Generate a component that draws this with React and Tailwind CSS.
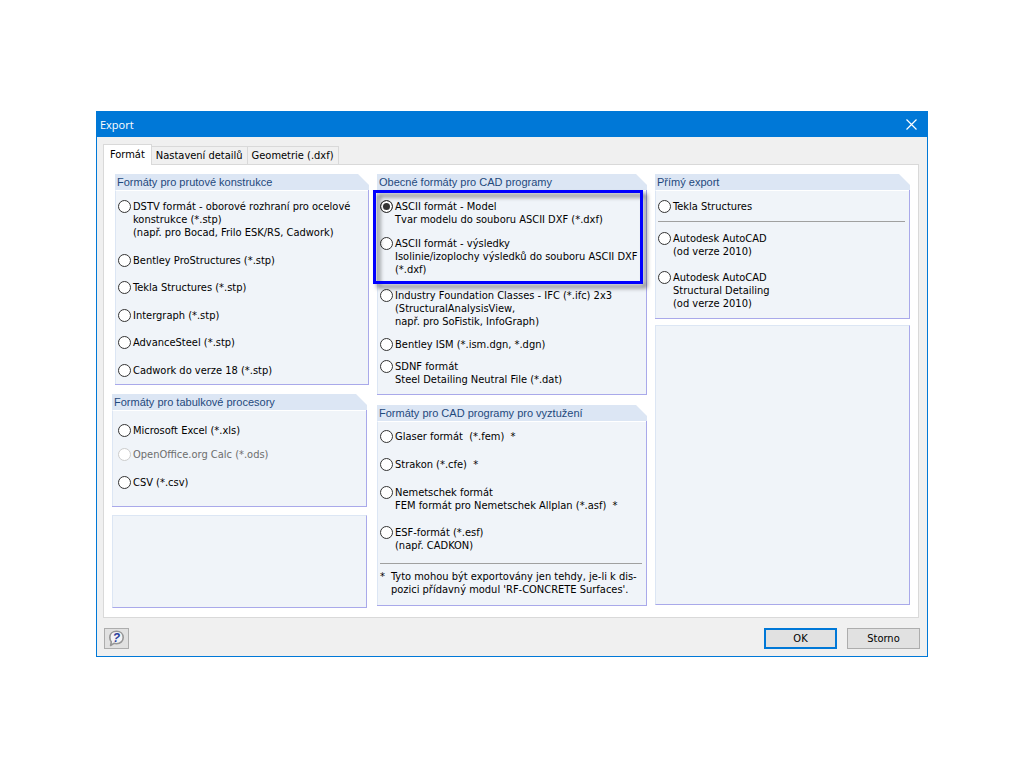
import { useState } from "react";
import clsx from "clsx";

const TABS = ["Formát", "Nastavení detailů", "Geometrie (.dxf)"];

// Titled box with the cut top right corner; without a title it is an empty box
const Group = ({ title, className, bodyClassName, children }) => (
  <section
    className={clsx(
      "flex flex-col border-r border-b border-[#a9a9ea] bg-[#f0f4f9]",
      !title && "border-t border-l border-t-[#dce6f4] border-l-[#dce6f4]",
      className
    )}
  >
    {title && (
      <h2 className="-mr-px h-4 bg-white font-['Liberation_Sans',sans-serif] text-[11px] leading-4 text-[#1f497d]">
        <span className="block bg-[#dce6f4] pl-0.5 [clip-path:polygon(0_0,calc(100%-11px)_0,100%_11px,100%_100%,0_100%)]">
          {title}
        </span>
      </h2>
    )}
    {title && (
      <div
        className={clsx(
          "flex grow flex-col border-t border-l border-t-white border-l-[#dce6f4] pr-1",
          bodyClassName
        )}
      >
        {children}
      </div>
    )}
  </section>
);

const Option = ({ id, lines, className, checked, disabled }) => (
  <div className={clsx("flex items-start gap-0.5", className)}>
    <input
      type="radio"
      name="format"
      id={id}
      defaultChecked={checked}
      disabled={disabled}
      className="size-[13px] shrink-0 appearance-none rounded-full border border-[#333] bg-white checked:bg-[#333] checked:shadow-[inset_0_0_0_2px_white] disabled:border-[#ccc]"
    />
    <label
      htmlFor={id}
      className={clsx("whitespace-pre", disabled && "text-[#6d6d6d]")}
    >
      {lines.join("\n")}
    </label>
  </div>
);

const Separator = ({ className }) => (
  <hr className={clsx("border-t border-[#a0a0a0]", className)} />
);

const HelpIcon = () => (
  <svg width="17" height="17" viewBox="0 0 17 17" aria-hidden="true">
    <path
      d="M8.500 1.200c4 0 6.700 2.700 6.700 6.200s-2.700 6.300-6.700 6.300c-1 0-1.800-.1-2.600-.4L2.600 15.500l.7-3.700C2.300 10.500 1.800 9 1.800 7.400c0-3.500 2.700-6.200 6.700-6.200z"
      fill="#f2f2f5"
      stroke="#969696"
      strokeWidth="1.6"
      strokeLinejoin="round"
    />
    <text
      x="8.500"
      y="12"
      textAnchor="middle"
      fontFamily="Liberation Sans, sans-serif"
      fontSize="12"
      fontWeight="bold"
      fontStyle="italic"
      fill="#2b3f9c"
    >
      ?
    </text>
  </svg>
);

const App = () => {
  const [activeTab, setActiveTab] = useState(TABS[0]);

  return (
    <div className="min-h-screen bg-white px-24 pt-[111px] font-['DejaVu_Sans_Condensed','Noto_Sans',sans-serif] text-[11px] leading-[13px] text-black">
      <div className="border border-[#0078d7] bg-[#f0f0f0]">
        <header className="flex h-[25px] items-center justify-between bg-[#0078d7] pr-2.5 pl-[3px] text-white">
          <h1 className="font-['Open_Sans',sans-serif] text-[11px]">Export</h1>
          <button type="button" aria-label="Zavřít">
            <svg width="11" height="11" viewBox="0 0 11 11">
              <path d="M.5.5l10 10M10.500.5l-10 10" stroke="white" strokeWidth="1.2" />
            </svg>
          </button>
        </header>

        <div className="px-1.5 pt-[7px]">
          {/* Tabs */}
          <div role="tablist" className="flex items-end">
            {TABS.map((tab) => (
              <button
                key={tab}
                type="button"
                role="tab"
                aria-selected={tab === activeTab}
                onClick={() => setActiveTab(tab)}
                className={clsx(
                  "border-t border-r border-[#d9d9d9]",
                  tab === activeTab
                    ? "relative -mb-px h-[21px] border-l bg-white px-1.5 pb-0.5"
                    : "h-[18px] px-1"
                )}
              >
                {tab}
              </button>
            ))}
          </div>

          <main className="mr-0.5 grid grid-cols-[257fr_270fr_255fr] gap-2 border border-[#d9d9d9] bg-white pt-[9px] pr-2 pb-[9px] pl-2">
            <div className="flex flex-col">
              <Group
                title="Formáty pro prutové konstrukce"
                className="ml-[3px] min-h-[211px]"
                bodyClassName="justify-between pt-[9px] pb-[7px] pl-0.5"
              >
                <Option
                  id="dstv"
                  lines={[
                    "DSTV formát - oborové rozhraní pro ocelové",
                    "konstrukce (*.stp)",
                    "(např. pro Bocad, Frilo ESK/RS, Cadwork)",
                  ]}
                />
                <Option id="prostructures" lines={["Bentley ProStructures (*.stp)"]} />
                <Option id="tekla-stp" lines={["Tekla Structures (*.stp)"]} />
                <Option id="intergraph" lines={["Intergraph (*.stp)"]} />
                <Option id="advancesteel" lines={["AdvanceSteel (*.stp)"]} />
                <Option id="cadwork" lines={["Cadwork do verze 18 (*.stp)"]} />
              </Group>
              <Group
                title="Formáty pro tabulkové procesory"
                className="mt-[9px] mr-0.5"
                bodyClassName="pt-[13px] pb-[17px] pl-[5px]"
              >
                <Option id="excel" lines={["Microsoft Excel (*.xls)"]} />
                <Option
                  id="openoffice"
                  lines={["OpenOffice.org Calc (*.ods)"]}
                  className="mt-[11px]"
                  disabled
                />
                <Option id="csv" lines={["CSV (*.csv)"]} className="mt-[15px]" />
              </Group>
              <Group className="mt-2 mr-0.5 min-h-[93px]" />
            </div>

            <div className="flex flex-col">
              <Group
                title="Obecné formáty pro CAD programy"
                bodyClassName="pt-[9px] pb-2 pl-0.5"
              >
                <div className="relative">
                  <Option
                    id="ascii-model"
                    lines={["ASCII formát - Model", "Tvar modelu do souboru ASCII DXF (*.dxf)"]}
                    checked
                  />
                  <Option
                    id="ascii-results"
                    lines={[
                      "ASCII formát - výsledky",
                      "Isolinie/izoplochy výsledků do souboru ASCII DXF",
                      "(*.dxf)",
                    ]}
                    className="mt-[11px]"
                  />
                  {/* Highlight frame over both ASCII options */}
                  <div className="pointer-events-none absolute -top-2.5 -right-px -bottom-2 -left-[7px] border-3 border-[#0000ff] drop-shadow-[4px_4px_2px_rgba(0,0,0,0.5)]" />
                </div>
                <Option
                  id="ifc"
                  lines={[
                    "Industry Foundation Classes - IFC (*.ifc) 2x3",
                    "(StructuralAnalysisView,",
                    "např. pro SoFistik, InfoGraph)",
                  ]}
                  className="mt-[13px]"
                />
                <Option
                  id="ism"
                  lines={["Bentley ISM (*.ism.dgn, *.dgn)"]}
                  className="mt-2.5"
                />
                <Option
                  id="sdnf"
                  lines={["SDNF formát", "Steel Detailing Neutral File (*.dat)"]}
                  className="mt-[9px]"
                />
              </Group>
              <Group
                title="Formáty pro CAD programy pro vyztužení"
                className="mt-2.5"
                bodyClassName="pt-2 pb-[9px] pl-0.5"
              >
                <Option id="glaser" lines={["Glaser formát  (*.fem)  *"]} />
                <Option id="strakon" lines={["Strakon (*.cfe)  *"]} className="mt-[15px]" />
                <Option
                  id="nemetschek"
                  lines={["Nemetschek formát", "FEM formát pro Nemetschek Allplan (*.asf)  *"]}
                  className="mt-[15px]"
                />
                <Option
                  id="esf"
                  lines={["ESF-formát (*.esf)", "(např. CADKON)"]}
                  className="mt-3.5"
                />
                <Separator className="mt-[11px]" />
                <div className="mt-1.5 flex gap-1.5 whitespace-pre">
                  <span>*</span>
                  <p>{"Tyto mohou být exportovány jen tehdy, je-li k dis-\npozici přídavný modul 'RF-CONCRETE Surfaces'."}</p>
                </div>
              </Group>
            </div>

            <div className="flex flex-col">
              <Group title="Přímý export" bodyClassName="pt-[9px] pb-2 pl-0.5">
                <Option id="tekla" lines={["Tekla Structures"]} />
                <Separator className="mt-2" />
                <Option
                  id="autocad"
                  lines={["Autodesk AutoCAD", "(od verze 2010)"]}
                  className="mt-2.5"
                />
                <Option
                  id="autocad-detailing"
                  lines={["Autodesk AutoCAD", "Structural Detailing", "(od verze 2010)"]}
                  className="mt-[13px]"
                />
              </Group>
              <Group className="mt-1.5 min-h-[280px]" />
            </div>
          </main>
        </div>

        <footer className="flex items-center gap-2.5 px-[7px] pt-2.5 pb-[7px]">
          <button
            type="button"
            aria-label="Nápověda"
            className="mr-auto flex h-[21px] w-[25px] items-center justify-center border border-[#adadad] bg-[#e1e1e1]"
          >
            <HelpIcon />
          </button>
          <button type="button" className="h-[21px] w-[73px] border-2 border-[#0078d7] bg-[#e1e1e1]">
            OK
          </button>
          <button type="button" className="h-[21px] w-[73px] border border-[#adadad] bg-[#e1e1e1]">
            Storno
          </button>
        </footer>
      </div>
    </div>
  );
};

export default App;
